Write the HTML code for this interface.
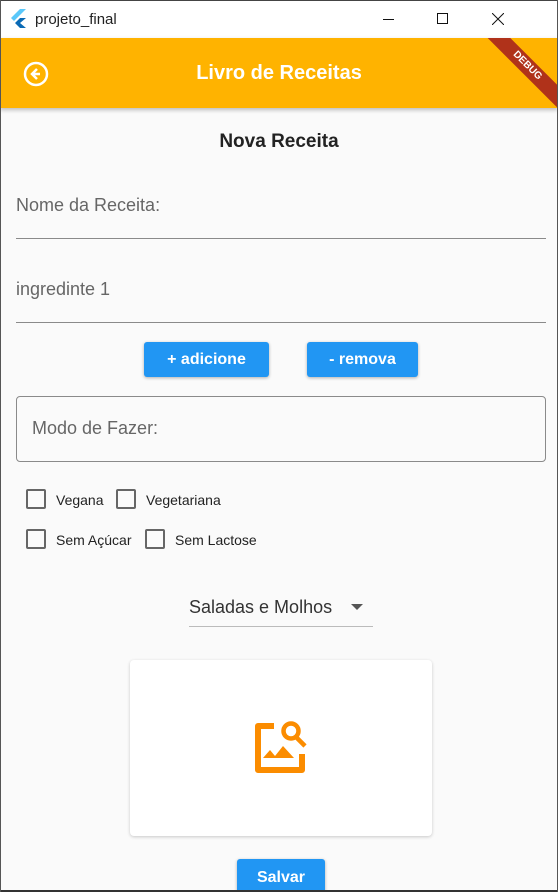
<!DOCTYPE html>
<html><head><style>
*{margin:0;padding:0;box-sizing:border-box}
html,body{width:558px;height:892px;overflow:hidden}
body{background:#fafafa;font-family:"Liberation Sans",sans-serif;position:relative}
.tb{position:absolute;left:0;top:0;width:558px;height:38px;background:#fff;border-top:1px solid #444}
.ab{position:absolute;left:0;top:38px;width:558px;height:70px;background:#ffb300;box-shadow:0 2px 4px rgba(0,0,0,.25);overflow:hidden}
.t{position:absolute;color:#222}
.line{position:absolute;left:16px;width:530px;height:1px;background:#8a8a8a}
.btn{position:absolute;background:#2196f3;color:#fff;font-weight:bold;font-size:16px;border-radius:3px;text-align:center;box-shadow:0 1px 3px rgba(0,0,0,.3)}
.cb{position:absolute;width:20px;height:20px;border:2px solid #666;border-radius:2px}
.cl{position:absolute;font-size:14px;color:#222}
</style></head><body>
<div class="tb">
<svg style="position:absolute;left:11px;top:8px" width="16" height="20" viewBox="0 0 16 20"><path d="M9 0L0 9l3 3L15 0z" fill="#5ac8fa"/><path d="M9 9L4 14l5 5h6l-6-5 6-5z" fill="#0a6ab5"/></svg>
<div class="t" style="left:35px;top:10px;font-size:15px">projeto_final</div>
<div style="position:absolute;left:383px;top:18px;width:11px;height:1px;background:#111"></div>
<div style="position:absolute;left:437px;top:12px;width:11px;height:11px;border:1px solid #111"></div>
<svg style="position:absolute;left:492px;top:12px" width="12" height="12"><path d="M0 0L12 12M12 0L0 12" stroke="#111" stroke-width="1"/></svg>
</div>
<div class="ab">
<svg style="position:absolute;left:23px;top:23px" width="26" height="26" viewBox="0 0 26 26"><circle cx="13" cy="13" r="11" fill="none" stroke="#fff" stroke-width="2.5"/><path d="M14 8l-5 5 5 5M9 13h8" stroke="#fff" stroke-width="2.5" fill="none"/></svg>
<div style="position:absolute;left:0;width:558px;top:24px;text-align:center;color:#fff;font-weight:bold;font-size:20px">Livro de Receitas</div>
<div style="position:absolute;left:467px;top:20px;width:120px;height:16px;background:#b0321a;transform:rotate(45deg);color:#fff;font-size:10px;font-weight:bold;text-align:center;line-height:16px">DEBUG</div>
</div>
<div class="t" style="left:0;width:558px;text-align:center;top:131px;font-weight:bold;font-size:19px">Nova Receita</div>
<div class="t" style="left:16px;top:195px;font-size:18px;color:#666">Nome da Receita:</div>
<div class="line" style="top:238px"></div>
<div class="t" style="left:16px;top:279px;font-size:18px;color:#666">ingredinte 1</div>
<div class="line" style="top:322px"></div>
<div class="btn" style="left:144px;top:342px;width:125px;height:35px;line-height:35px">+ adicione</div>
<div class="btn" style="left:307px;top:342px;width:111px;height:35px;line-height:35px">- remova</div>
<div style="position:absolute;left:16px;top:396px;width:530px;height:66px;border:1px solid #8a8a8a;border-radius:4px"></div>
<div class="t" style="left:32px;top:418px;font-size:18px;color:#666">Modo de Fazer:</div>
<div class="cb" style="left:26px;top:489px"></div><div class="cl" style="left:56px;top:492px">Vegana</div>
<div class="cb" style="left:116px;top:489px"></div><div class="cl" style="left:146px;top:492px">Vegetariana</div>
<div class="cb" style="left:26px;top:529px"></div><div class="cl" style="left:56px;top:532px">Sem Açúcar</div>
<div class="cb" style="left:145px;top:529px"></div><div class="cl" style="left:175px;top:532px">Sem Lactose</div>
<div class="t" style="left:189px;top:597px;font-size:18px;color:#333">Saladas e Molhos</div>
<svg style="position:absolute;left:351px;top:604px" width="12" height="6"><path d="M0 0h12L6 6z" fill="#555"/></svg>
<div style="position:absolute;left:189px;top:626px;width:184px;height:1px;background:#bbb"></div>
<div style="position:absolute;left:130px;top:660px;width:302px;height:176px;background:#fff;border-radius:4px;box-shadow:0 1px 3px rgba(0,0,0,.2)"></div>
<svg style="position:absolute;left:254px;top:720px" width="56" height="56" viewBox="0 0 56 56">
<path d="M20 6H4v44h44V34" fill="none" stroke="#fb8c00" stroke-width="6" stroke-linejoin="round"/>
<path d="M9 38l7-8 5 6 8-10 11 12z" fill="#fb8c00"/>
<circle cx="37" cy="11" r="7.5" fill="none" stroke="#fb8c00" stroke-width="4.5"/>
<path d="M42 17l9 9" stroke="#fb8c00" stroke-width="4.5"/>
</svg>
<div class="btn" style="left:237px;top:859px;width:88px;height:40px;line-height:38px">Salvar</div>
<div style="position:absolute;left:0;top:890px;width:558px;height:2px;background:#333"></div>
<div style="position:absolute;left:0;top:0;width:1px;height:892px;background:#555"></div>
<div style="position:absolute;right:0;top:0;width:1px;height:892px;background:#555"></div>
</body></html>
